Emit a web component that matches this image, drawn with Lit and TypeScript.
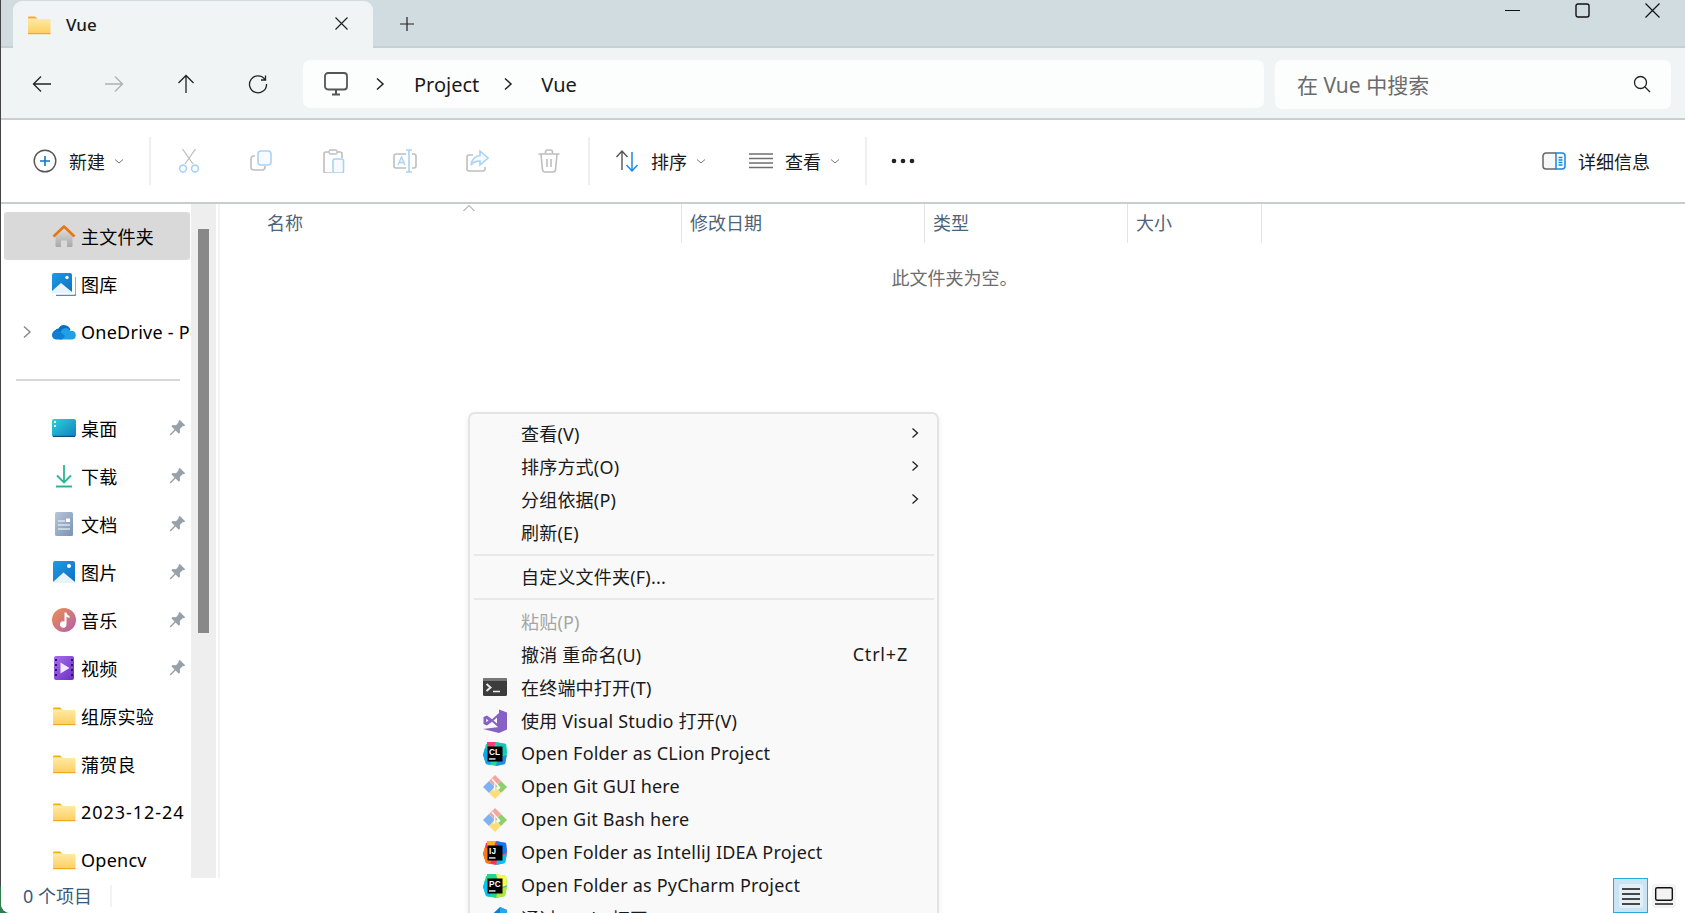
import { LitElement, html, css, TemplateResult } from 'lit';
import { customElement } from 'lit/decorators.js';

const folderIcon = html`<svg class="ico" viewBox="0 0 24 24">
  <defs><linearGradient id="fd" x1="0" y1="0" x2="0" y2="1"><stop offset="0" stop-color="#ffe9a6"/><stop offset="1" stop-color="#fccf5c"/></linearGradient></defs>
  <path d="M1 4.5a1 1 0 0 1 1-1h6l2.5 2H1z" fill="#f5ac16"/>
  <rect x="1" y="6" width="22.5" height="15" rx="1" fill="url(#fd)"/>
  <rect x="1" y="20" width="22.5" height="1.2" fill="#eeaa22"/>
</svg>`;

const pin = html`<svg class="pin" viewBox="0 0 16 16"><path fill="#98a1a8" d="M10 .6l5.2 5.2-1.2 1.1-1-.3-2.8 2.8.2 3.2-1.2 1.2-3-3-4.2 4.2-1.4.4.4-1.4 4.2-4.2-3-3 1.200-1.200 3.200.2L9.200 2.800l-.3-1z"/></svg>`;

const homeIcon = html`<svg class="ico" viewBox="0 0 24 24">
  <defs><linearGradient id="hm" x1="0" y1="0" x2="0" y2="1"><stop offset="0" stop-color="#dcdcdc"/><stop offset="1" stop-color="#a8a8a8"/></linearGradient></defs>
  <path d="M3.500 11.500L12 4.500l8.500 7V22a1 1 0 0 1-1 1H15v-6.500H9V23H4.500a1 1 0 0 1-1-1z" fill="url(#hm)"/>
  <path d="M1.500 12.500L12 2.500l10.500 10" fill="none" stroke="#e8760f" stroke-width="2.600" stroke-linejoin="round"/>
</svg>`;

const galleryIcon = html`<svg class="ico" viewBox="0 0 24 24">
  <defs><linearGradient id="gl" x1="0" y1="0" x2="1" y2="1"><stop offset="0" stop-color="#1f9be2"/><stop offset="1" stop-color="#0f6fc4"/></linearGradient></defs>
  <path d="M4 23.500h18a2 2 0 0 0 2-2V5" fill="none" stroke="#3d8fd6" stroke-width="1.300"/>
  <rect x="0" y="0" width="20" height="20" rx="2" fill="url(#gl)" transform="translate(0 1)"/>
  <path d="M0 19l9-8 11 9v1H1.500A1.500 1.500 0 0 1 0 19.500z" fill="#e8f3fc"/>
  <circle cx="15" cy="5.500" r="1.700" fill="#fff"/>
</svg>`;

const oneDriveIcon = html`<svg class="ico" viewBox="0 0 24 24">
  <path d="M7 18.500a5 5 0 0 1-.5-10 6.500 6.500 0 0 1 12 1.500z" fill="#0a6dc2"/>
  <path d="M9 19.500a3.500 3.500 0 0 1-.5-7 5 5 0 0 1 9.500-1.500 4.300 4.300 0 0 1 5.800 4.500c0 2.500-1.800 4-4 4z" fill="#1e9fe8"/>
  <path d="M0 15a5 5 0 0 1 6-5l7 6-3 3.500H4A4.500 4.500 0 0 1 0 15z" fill="#0f7fd6"/>
</svg>`;

const desktopIcon = html`<svg class="ico" viewBox="0 0 24 24">
  <defs><linearGradient id="dk" x1="0" y1="0" x2="1" y2="1"><stop offset="0" stop-color="#2fd0e2"/><stop offset="1" stop-color="#0f80b8"/></linearGradient></defs>
  <rect x="0" y="3" width="24" height="18" rx="2" fill="url(#dk)"/>
  <rect x="2" y="5" width="2" height="2" fill="#e6fbff"/><rect x="2" y="9" width="2" height="2" fill="#e6fbff"/>
  <rect x="1" y="19.800" width="22" height="1.200" fill="#0a4f80"/>
</svg>`;

const downloadIcon = html`<svg class="ico" viewBox="0 0 24 24" fill="none" stroke="#2bb795" stroke-width="1.800">
  <path d="M12 1v17M5 11.500l7 7 7-7"/><path d="M4 22.500h16" stroke-width="2"/>
</svg>`;

const docIcon = html`<svg class="ico" viewBox="0 0 24 24">
  <defs><linearGradient id="dc" x1="0" y1="0" x2="1" y2="1"><stop offset="0" stop-color="#b7c7db"/><stop offset="1" stop-color="#7893b2"/></linearGradient></defs>
  <rect x="3" y="0" width="18" height="24" rx="1.500" fill="url(#dc)"/>
  <path d="M6 9h7M6 13h12M6 17h12" stroke="#fff" stroke-width="1.200"/><rect x="14" y="6.500" width="4" height="3.500" fill="#fff"/>
</svg>`;

const pictureIcon = html`<svg class="ico" viewBox="0 0 24 24">
  <defs><linearGradient id="pc" x1="0" y1="0" x2="1" y2="1"><stop offset="0" stop-color="#1f9be2"/><stop offset="1" stop-color="#0f6fc4"/></linearGradient></defs>
  <rect x="1" y="1" width="22" height="22" rx="2" fill="url(#pc)"/>
  <path d="M1 22l10.500-9.500L23 22v1H1z" fill="#e8f3fc"/><circle cx="17" cy="6" r="2" fill="#fff"/>
</svg>`;

const musicIcon = html`<svg class="ico" viewBox="0 0 24 24">
  <defs><linearGradient id="ms" x1="0" y1="0" x2="1" y2="1"><stop offset="0" stop-color="#f0904e"/><stop offset="1" stop-color="#b05fb0"/></linearGradient></defs>
  <circle cx="12" cy="12" r="12" fill="url(#ms)"/>
  <path d="M12.500 4.500h2c.3 2 1.500 3 3 3.500v2c-1.200-.2-2.200-.7-3-1.500v8a3.300 3.300 0 1 1-2-3z" fill="#fff"/>
</svg>`;

const videoIcon = html`<svg class="ico" viewBox="0 0 24 24">
  <defs><linearGradient id="vd" x1="0" y1="0" x2="1" y2="1"><stop offset="0" stop-color="#a76ef0"/><stop offset="1" stop-color="#6a2fc0"/></linearGradient></defs>
  <rect x="2" y="0" width="20" height="24" rx="2" fill="url(#vd)"/>
  <path d="M4 3v2M4 8v2M4 13v2M4 18v2M20 3v2M20 8v2M20 13v2M20 18v2" stroke="#32145e" stroke-width="2"/>
  <path d="M8.500 6.500l9 5.500-9 5.500z" fill="#f1e8ff"/>
</svg>`;

const terminalIcon = html`<svg class="ico" viewBox="0 0 24 24">
  <rect x="0" y="2" width="24" height="18" rx="1.500" fill="#3c3c3c"/>
  <path d="M0 3.500A1.500 1.500 0 0 1 1.500 2h21A1.500 1.500 0 0 1 24 3.500V5H0z" fill="#777"/>
  <path d="M3.500 8l4 3.500-4 3.500" fill="none" stroke="#e8e8e8" stroke-width="2"/><path d="M10 15.500h7" stroke="#e8e8e8" stroke-width="1.600"/>
</svg>`;

const vsIcon = html`<svg class="ico" viewBox="0 0 24 24">
  <path fill="#8661c5" d="M16 .5L24 3.500v17L16 24 0 20l16-2z"/>
  <path fill="#8661c5" fill-rule="evenodd" d="M.5 8L4 6.500l5 3.800L16 4v15l-7-6.300-5 3.800-3.500-1.500zM3.200 9.800v3.400l2.300-1.700zM10.500 11.500l3.500 3v-6z"/>
</svg>`;

const gitIcon = html`<svg class="ico" viewBox="0 0 24 24">
  <path d="M0 12l6-6 6 6-6 6z" fill="#7fb2f5"/>
  <path d="M12 12l6-6 6 6-6 6z" fill="#8fcf6b"/>
  <path d="M6 18l6-6 6 6-6 6z" fill="#fbdd7a"/>
  <path d="M6 6l6-6 6 6-6 6z" fill="#f3a6a0"/>
  <path d="M9 4l8 9" stroke="#f9f9f9" stroke-width="1.400"/><circle cx="15" cy="13" r="1.800" fill="#f9f9f9"/><path d="M12 8l-1 8" stroke="#f9f9f9" stroke-width="1.200"/>
</svg>`;

const codeIcon = html`<svg class="ico" viewBox="0 0 24 24">
  <path d="M17 0l7 3v18l-7 3L7 14.500 2.500 18 0 16.500V7.500L2.500 6 7 9.500z" fill="#0f7fd0"/>
  <path d="M17 0l7 3v18l-7 3z" fill="#28a6ea"/>
</svg>`;

// jetbrains logos: irregular colored blob with the black square on top
function jetIcon(label: string, a: string, b: string, c: string, d: string, e: string): TemplateResult {
  return html`<svg class="ico" viewBox="0 0 24 24">
    <path d="M3 2l9-2 11 2 1 9-2 11-9 2-10-2-3-9 2-7z" fill="${a}"/>
    <path d="M13 0l10 2 1 9-7 3z" fill="${b}"/>
    <path d="M0 13l2-7 9 5-4 12-4-1z" fill="${c}"/>
    <path d="M13 24l9-2 2-9-9 2z" fill="${d}"/>
    <path d="M4 0l9 0-2 5-7 1z" fill="${e}"/>
    <rect x="4.500" y="4.500" width="15" height="15" fill="#000"/>
    <text x="6" y="12.800" font-size="8.200" font-weight="700" fill="#fff" font-family="Liberation Sans, sans-serif">${label}</text>
    <rect x="6" y="16.300" width="6.500" height="1.300" fill="#fff"/>
  </svg>`;
}

interface NavItem {
  icon: TemplateResult | null;
  label: string;
  pinned?: boolean;
  expand?: boolean;
  selected?: boolean;
  wide?: boolean;
}

const topNav: NavItem[] = [
  { icon: homeIcon, label: '主文件夹', selected: true },
  { icon: galleryIcon, label: '图库' },
  { icon: oneDriveIcon, label: 'OneDrive - Personal', expand: true },
];

const quickNav: NavItem[] = [
  { icon: desktopIcon, label: '桌面', pinned: true },
  { icon: downloadIcon, label: '下载', pinned: true },
  { icon: docIcon, label: '文档', pinned: true },
  { icon: pictureIcon, label: '图片', pinned: true },
  { icon: musicIcon, label: '音乐', pinned: true },
  { icon: videoIcon, label: '视频', pinned: true },
  { icon: folderIcon, label: '组原实验' },
  { icon: folderIcon, label: '蒲贺良' },
  { icon: folderIcon, label: '2023-12-24', wide: true },
  { icon: folderIcon, label: 'Opencv' },
];

type MenuEntry = { sep: true } | { label: string; icon?: TemplateResult; sub?: boolean; key?: string; off?: boolean };

const menu: MenuEntry[] = [
  { label: '查看(V)', sub: true },
  { label: '排序方式(O)', sub: true },
  { label: '分组依据(P)', sub: true },
  { label: '刷新(E)' },
  { sep: true },
  { label: '自定义文件夹(F)...' },
  { sep: true },
  { label: '粘贴(P)', off: true },
  { label: '撤消 重命名(U)', key: 'Ctrl+Z' },
  { label: '在终端中打开(T)', icon: terminalIcon },
  { label: '使用 Visual Studio 打开(V)', icon: vsIcon },
  { label: 'Open Folder as CLion Project', icon: jetIcon('CL', '#1fd8a0', '#14c8b8', '#0aa8e8', '#1f8fe0', '#f53d7d') },
  { label: 'Open Git GUI here', icon: gitIcon },
  { label: 'Open Git Bash here', icon: gitIcon },
  { label: 'Open Folder as IntelliJ IDEA Project', icon: jetIcon('IJ', '#fe315d', '#087cfa', '#f97a12', '#07c3f2', '#fcb020') },
  { label: 'Open Folder as PyCharm Project', icon: jetIcon('PC', '#21d789', '#fcf84a', '#07c3f2', '#b4e636', '#21d789') },
  { label: '通过 Code 打开', icon: codeIcon },
];

@customElement('app-root')
export class AppRoot extends LitElement {
  static styles = css`
    :host {
      display: block;
      position: relative;
      width: 100%;
      height: 100vh;
      overflow: hidden;
      background: linear-gradient(#444 0 97%, #2f7d50 97%);
      font-family: 'Noto Sans', 'Noto Sans CJK SC', sans-serif;
      font-size: 18px;
      color: #1a1a1a;
    }
    .window {
      margin-left: 1px;
      height: 100%;
      display: flex;
      flex-direction: column;
      background: #fff;
      border-bottom-left-radius: 9px;
      overflow: hidden;
    }
    svg { display: block; flex: none; }
    .ico { width: 24px; height: 24px; }
    .title {
      height: 46px;
      flex: none;
      display: flex;
      align-items: flex-start;
      background: #d1dce1;
      border-bottom: 2px solid #c5d0d5;
    }
    .tab {
      margin: 1px 0 -2px 12px;
      width: 360px;
      height: 47px;
      box-sizing: border-box;
      padding: 0 24px 0 14px;
      display: flex;
      align-items: center;
      background: #f1f4f5;
      border-radius: 9px 9px 0 0;
    }
    .tab .ico { margin-top: 1px; }
    .tab-name {
      margin-left: 15px;
      flex: 1;
      font-size: 17px;
      font-weight: 500;
    }
    .tab-close { width: 15px; height: 15px; margin-top: -2px; }
    .plus { width: 16px; height: 16px; margin: 16px 0 0 26px; }
    .winbtns {
      margin-left: auto;
      padding: 3px 25px 0 0;
      display: flex;
      gap: 55px;
    }
    .winbtns svg { width: 15px; height: 15px; }
    .nav {
      height: 72px;
      flex: none;
      display: flex;
      align-items: center;
      padding: 2px 14px 0 5px;
      box-sizing: border-box;
      background: #f1f4f5;
      border-bottom: 2px solid #c5d0d3;
    }
    .navbtn {
      width: 72px;
      display: flex;
      justify-content: center;
      flex: none;
    }
    .navbtn svg { width: 20px; height: 20px; }
    .address {
      margin-left: 9px;
      flex: 1;
      height: 48px;
      display: flex;
      align-items: center;
      padding-left: 21px;
      background: #fcfdfd;
      border-radius: 7px;
      font-size: 20px;
    }
    .address .pc { width: 24px; height: 24px; }
    .crumb { width: 14px; height: 14px; margin: 0 27px 0 25px; }
    .crumb.last { margin: 0 26px 0 22px; }
    .search {
      margin-left: 11px;
      width: 396px;
      height: 49px;
      box-sizing: border-box;
      padding: 0 20px 0 22px;
      display: flex;
      align-items: center;
      justify-content: space-between;
      background: #fcfdfd;
      border-radius: 7px;
      font-size: 21px;
      color: #6b6b6b;
    }
    .search span { margin-top: -1px; }
    .search svg { width: 18px; height: 18px; }
    .toolbar {
      height: 84px;
      flex: none;
      box-sizing: border-box;
      display: flex;
      align-items: center;
      padding: 0 35px 0 32px;
      border-bottom: 2px solid #c8cccd;
      background: #fff;
    }
    .toolbar .ico { width: 24px; height: 24px; }
    .group { display: flex; align-items: center; flex: none; }
    .group span { margin-left: 12px; margin-top: -1px; }
    .caret { width: 10px; height: 10px; margin-left: 9px; }
    .tsep {
      width: 2px;
      height: 48px;
      flex: none;
      background: #efefef;
    }
    .tsep.a { margin-left: 25px; }
    .tsep.b { margin-left: 3px; }
    .tsep.c { margin-left: 25px; }
    .tools { margin-left: 2px; }
    .sort { margin-left: 25px; }
    .view { margin-left: 43px; }
    .tbtn {
      width: 72px;
      display: flex;
      justify-content: center;
      flex: none;
    }
    .more { margin-left: 24px; width: 24px; height: 24px; }
    .details { margin-left: auto; }
    .main { flex: 1; min-height: 0; display: flex; }
    .side {
      width: 190px;
      flex: none;
      box-sizing: border-box;
      padding-top: 8px;
      overflow: hidden;
      white-space: nowrap;
    }
    .row {
      height: 48px;
      margin: 0 1px 0 3px;
      display: flex;
      align-items: center;
      position: relative;
      border-radius: 3px;
    }
    .row.selected { background: #d9d9d9; }
    .row .ico { margin-left: 48px; }
    .row .label { margin-left: 5px; margin-top: -1px; color: #000; letter-spacing: 0.25px; }
    .row .label.wide { letter-spacing: 0.95px; }
    .expand {
      position: absolute;
      left: 17px;
      top: 17px;
      width: 12px;
      height: 14px;
    }
    .pin { position: absolute; left: 165px; top: 15px; width: 17px; height: 17px; }
    .navgap {
      height: 48px;
      display: flex;
      align-items: center;
      padding: 0 11px 0 15px;
    }
    .navgap div { flex: 1; height: 2px; background: #d6d6d6; }
    .track {
      width: 25px;
      flex: none;
      box-sizing: border-box;
      padding: 25px 7px 0;
      background: #eeeeee;
    }
    .thumb { height: 404px; background: #888888; }
    .content {
      flex: 1;
      margin-left: 2px;
      border-left: 2px solid #f3f3f3;
    }
    .cols { display: flex; height: 39px; color: #4f6378; }
    .col {
      box-sizing: border-box;
      padding: 0 0 0 8px;
      border-right: 1px solid #e4e4e4;
      line-height: 39px;
      position: relative;
    }
    .col1 { width: 462px; padding-left: 47px; }
    .col2 { width: 243px; }
    .col3 { width: 203px; }
    .col4 { width: 134px; }
    .sortmark { position: absolute; left: 242px; top: 0; width: 14px; height: 8px; }
    .empty { margin-top: 23px; padding-left: 4px; line-height: 24px; text-align: center; color: #6d6d6d; }
    .status {
      height: 35px;
      flex: none;
      display: flex;
      align-items: center;
      background: #fff;
      padding-left: 22px;
      color: #3c5a78;
    }
    .status-text { width: 87px; margin-top: -1px; }
    .status-sep { width: 2px; height: 22px; background: #f2f2f2; }
    .views { margin-left: auto; margin-right: 9px; display: flex; align-items: center; gap: 4px; }
    .view-list {
      width: 35px;
      height: 35px;
      box-sizing: border-box;
      border: 1px solid #2ca7e0;
      background: #c9e5f5;
      display: flex;
      align-items: center;
      justify-content: center;
    }
    .view-list div {
      width: 24px;
      height: 24px;
      border-radius: 3px;
      background: #e3eef5;
      display: flex;
      align-items: center;
      justify-content: center;
    }
    .view-list svg { width: 20px; height: 20px; }
    .view-tile {
      width: 24px;
      height: 24px;
      border-radius: 3px;
      background: #f3f3f3;
      display: flex;
      align-items: center;
      justify-content: center;
    }
    .view-tile svg { width: 20px; height: 20px; }
    .menu {
      position: absolute;
      left: 468px;
      top: 412px;
      width: 471px;
      box-sizing: border-box;
      padding: 3px 3px 0 0;
      background: #f9f9f9;
      border: 2px solid #e4e4e4;
      border-radius: 7px;
      box-shadow: 0 2px 6px rgba(0, 0, 0, 0.08);
      letter-spacing: 0.2px;
    }
    .mitem {
      height: 33px;
      display: flex;
      align-items: center;
      padding-left: 13px;
      color: #1a1a1a;
      white-space: nowrap;
    }
    .mitem.off { color: #a6a6a6; }
    .micon { width: 24px; height: 24px; flex: none; }
    .mlabel { margin-left: 14px; flex: 1; margin-top: -2px; }
    .mkey { margin-right: 26px; margin-top: -2px; letter-spacing: 0.8px; }
    .msub { width: 8px; height: 12px; margin-right: 15px; margin-top: -2px; }
    .msep { height: 11.5px; display: flex; align-items: center; padding-left: 4px; }
    .msep div { flex: 1; height: 2px; background: #e9e9e9; }
  `;

  private renderRow(n: NavItem) {
    return html`<div class="row ${n.selected ? 'selected' : ''}">
      ${n.expand
        ? html`<svg class="expand" viewBox="0 0 12 14"><path d="M3 1.500L9 7l-6 5.500" fill="none" stroke="#8a8a8a" stroke-width="1.500"/></svg>`
        : ''}
      ${n.icon}
      <span class="label ${n.wide ? 'wide' : ''}">${n.label}</span>
      ${n.pinned ? pin : ''}
    </div>`;
  }

  private renderMenu(m: MenuEntry) {
    if ('sep' in m) return html`<div class="msep"><div></div></div>`;
    return html`<div class="mitem ${m.off ? 'off' : ''}">
      <div class="micon">${m.icon ?? ''}</div>
      <span class="mlabel">${m.label}</span>
      ${m.key ? html`<span class="mkey">${m.key}</span>` : ''}
      ${m.sub
        ? html`<svg class="msub" viewBox="0 0 8 12"><path d="M1.500 1.500L6.500 6l-5 4.500" fill="none" stroke="#222" stroke-width="1.300"/></svg>`
        : ''}
    </div>`;
  }

  private chevronDown() {
    return html`<svg class="caret" viewBox="0 0 10 10"><path d="M1 3.500l4 3.500 4-3.500" fill="none" stroke="#777" stroke-width="1"/></svg>`;
  }

  render() {
    return html`
      <div class="window">
        <div class="title">
          <div class="tab">
            ${folderIcon}
            <span class="tab-name">Vue</span>
            <svg class="tab-close" viewBox="0 0 15 15"><path d="M1.500 1.500l12 12M13.500 1.500l-12 12" stroke="#222" stroke-width="1.200"/></svg>
          </div>
          <svg class="plus" viewBox="0 0 16 16"><path d="M8 1v14M1 8h14" stroke="#222" stroke-width="1.200"/></svg>
          <div class="winbtns">
            <svg viewBox="0 0 15 15"><path d="M0 7.500h15" stroke="#111" stroke-width="1"/></svg>
            <svg viewBox="0 0 15 15"><rect x="1" y="1" width="13" height="13" rx="2" fill="none" stroke="#111" stroke-width="1.400"/></svg>
            <svg viewBox="0 0 15 15"><path d="M.5.500l14 14M14.500.500l-14 14" stroke="#111" stroke-width="1.200"/></svg>
          </div>
        </div>

        <div class="nav">
          <div class="navbtn"><svg viewBox="0 0 20 20"><path d="M19 10H1.500M9 2.500L1.500 10 9 17.500" fill="none" stroke="#222" stroke-width="1.300"/></svg></div>
          <div class="navbtn"><svg viewBox="0 0 20 20"><path d="M1 10h17.500M11 2.500l7.500 7.500-7.500 7.500" fill="none" stroke="#b0b0b0" stroke-width="1.300"/></svg></div>
          <div class="navbtn"><svg viewBox="0 0 20 20"><path d="M10 19V1.500M2.500 9L10 1.500 17.500 9" fill="none" stroke="#222" stroke-width="1.300"/></svg></div>
          <div class="navbtn"><svg viewBox="0 0 20 20"><path d="M17 5.500A8.500 8.500 0 1 0 18.500 10M17.500 1.500v4.500h-4.500" fill="none" stroke="#222" stroke-width="1.300"/></svg></div>
          <div class="address">
            <svg class="pc" viewBox="0 0 24 24"><rect x="1" y="1" width="22" height="16.500" rx="3" fill="none" stroke="#555" stroke-width="1.800"/><path d="M8 22.500h8M12 17.500v5" stroke="#555" stroke-width="2"/></svg>
            <svg class="crumb" viewBox="0 0 14 14"><path d="M4 1.500L10 7l-6 5.500" fill="none" stroke="#222" stroke-width="1.500"/></svg>
            <span>Project</span>
            <svg class="crumb last" viewBox="0 0 14 14"><path d="M4 1.500L10 7l-6 5.500" fill="none" stroke="#222" stroke-width="1.500"/></svg>
            <span>Vue</span>
          </div>
          <div class="search">
            <span>在 Vue 中搜索</span>
            <svg viewBox="0 0 18 18"><circle cx="7.500" cy="7.500" r="6" fill="none" stroke="#222" stroke-width="1.300"/><path d="M12 12l5 5" stroke="#222" stroke-width="1.300"/></svg>
          </div>
        </div>

        <div class="toolbar">
          <div class="group">
            <svg class="ico" viewBox="0 0 24 24"><circle cx="12" cy="12" r="10.800" fill="none" stroke="#555" stroke-width="1.400"/><path d="M12 7v10M7 12h10" stroke="#0a78d4" stroke-width="1.600"/></svg>
            <span>新建</span>
            ${this.chevronDown()}
          </div>
          <div class="tsep a"></div>
          <div class="group tools">
            <div class="tbtn"><svg class="ico" viewBox="0 0 24 24" fill="none"><path d="M5.500 0L16 15M18.500 0L8 15" stroke="#bfbfbf" stroke-width="1.300"/><circle cx="6" cy="19.500" r="3.400" stroke="#a9d3f5" stroke-width="1.600"/><circle cx="18" cy="19.500" r="3.400" stroke="#a9d3f5" stroke-width="1.600"/></svg></div>
            <div class="tbtn"><svg class="ico" viewBox="0 0 24 24" fill="none"><path d="M6 7H5a3 3 0 0 0-3 3v8a3 3 0 0 0 3 3h8a3 3 0 0 0 3-3v-1" stroke="#bfbfbf" stroke-width="1.600"/><rect x="9" y="2" width="13" height="14" rx="3" stroke="#a9d3f5" stroke-width="1.600" fill="#f7fbff"/></svg></div>
            <div class="tbtn"><svg class="ico" viewBox="0 0 24 24" fill="none"><path d="M8 3H5a2 2 0 0 0-2 2v17a2 2 0 0 0 2 2h6M16 3h3a2 2 0 0 1 2 2v4" stroke="#bfbfbf" stroke-width="1.600"/><rect x="8" y="1" width="8" height="4" rx="1.500" stroke="#bfbfbf" stroke-width="1.300"/><rect x="12" y="10" width="10.500" height="14" rx="2" stroke="#a9d3f5" stroke-width="1.600" fill="#f7fbff"/></svg></div>
            <div class="tbtn"><svg class="ico" viewBox="0 0 24 24" fill="none"><path d="M13 5H3a2 2 0 0 0-2 2v10a2 2 0 0 0 2 2h10M19 5h2a2 2 0 0 1 2 2v10a2 2 0 0 1-2 2h-2" stroke="#bfbfbf" stroke-width="1.600"/><path d="M13 1h6M16 1v22M13 23h6" stroke="#a9d3f5" stroke-width="1.600"/><path d="M5 16l3.500-8 3.500 8M6.200 13.500h4.600" stroke="#a9d3f5" stroke-width="1.400"/></svg></div>
            <div class="tbtn"><svg class="ico" viewBox="0 0 24 24" fill="none"><path d="M8 6H4a2 2 0 0 0-2 2v12a2 2 0 0 0 2 2h14a2 2 0 0 0 2-2v-2" stroke="#bfbfbf" stroke-width="1.600"/><path d="M15 2l8 7-8 7v-4c-4 0-7 1-9 4 .5-5 4-9 9-9.500z" stroke="#a9d3f5" stroke-width="1.600" fill="#f7fbff"/></svg></div>
            <div class="tbtn"><svg class="ico" viewBox="0 0 24 24" fill="none" stroke="#bfbfbf" stroke-width="1.600"><path d="M1.500 5h21M4 5l1.500 16a2.500 2.500 0 0 0 2.500 2h8a2.500 2.500 0 0 0 2.500-2L20 5M8.500 5V3a2 2 0 0 1 2-2h3a2 2 0 0 1 2 2v2M10 10v8M14 10v8"/></svg></div>
          </div>
          <div class="tsep b"></div>
          <div class="group sort">
            <svg class="ico" viewBox="0 0 24 24" fill="none"><path d="M7 21V2M1.500 8L7 2l5.500 6" stroke="#555" stroke-width="1.400"/><path d="M17 3v19M11.500 16l5.500 6 5.500-6" stroke="#1e88e5" stroke-width="1.500"/></svg>
            <span>排序</span>
            ${this.chevronDown()}
          </div>
          <div class="group view">
            <svg class="ico" viewBox="0 0 24 24"><path d="M0 5h24M0 9.500h24M0 14h24M0 18.500h24" stroke="#6f6f6f" stroke-width="1.600"/></svg>
            <span>查看</span>
            ${this.chevronDown()}
          </div>
          <div class="tsep c"></div>
          <svg class="more" viewBox="0 0 24 24"><circle cx="3" cy="12" r="2.300" fill="#222"/><circle cx="12" cy="12" r="2.300" fill="#222"/><circle cx="21" cy="12" r="2.300" fill="#222"/></svg>
          <div class="group details">
            <svg class="ico" viewBox="0 0 24 24" fill="none"><path d="M14 4H4a3 3 0 0 0-3 3v10a3 3 0 0 0 3 3h10" stroke="#666" stroke-width="1.500" fill="#f8f8f8"/><path d="M14 4h6a3 3 0 0 1 3 3v10a3 3 0 0 1-3 3h-6z" stroke="#1a86d8" stroke-width="1.500" fill="#fff"/><path d="M16.500 8.500h4M16.500 11h4M16.500 13.500h4M16.500 16h4" stroke="#1a86d8" stroke-width="1.300"/></svg>
            <span>详细信息</span>
          </div>
        </div>

        <div class="main">
          <div class="side">
            ${topNav.map((n) => this.renderRow(n))}
            <div class="navgap"><div></div></div>
            ${quickNav.map((n) => this.renderRow(n))}
          </div>
          <div class="track"><div class="thumb"></div></div>
          <div class="content">
            <div class="cols">
              <div class="col col1">名称
                <svg class="sortmark" viewBox="0 0 14 8"><path d="M1.500 7L7 1.500 12.500 7" fill="none" stroke="#8a8a8a" stroke-width="1"/></svg>
              </div>
              <div class="col col2">修改日期</div>
              <div class="col col3">类型</div>
              <div class="col col4">大小</div>
            </div>
            <div class="empty">此文件夹为空。</div>
          </div>
        </div>

        <div class="status">
          <span class="status-text">0 个项目</span>
          <div class="status-sep"></div>
          <div class="views">
            <div class="view-list"><div><svg viewBox="0 0 20 20"><path d="M1 3h18M1 8h18M1 13h18M1 18h18" stroke="#111" stroke-width="1.400"/></svg></div></div>
            <div class="view-tile"><svg viewBox="0 0 20 20"><rect x="1.700" y="1.700" width="16.600" height="12.600" rx="1.500" fill="none" stroke="#111" stroke-width="1.400"/><path d="M1 18h18" stroke="#111" stroke-width="1.400"/></svg></div>
          </div>
        </div>
      </div>

      <div class="menu">${menu.map((m) => this.renderMenu(m))}</div>
    `;
  }
}

declare global {
  interface HTMLElementTagNameMap {
    'app-root': AppRoot;
  }
}
